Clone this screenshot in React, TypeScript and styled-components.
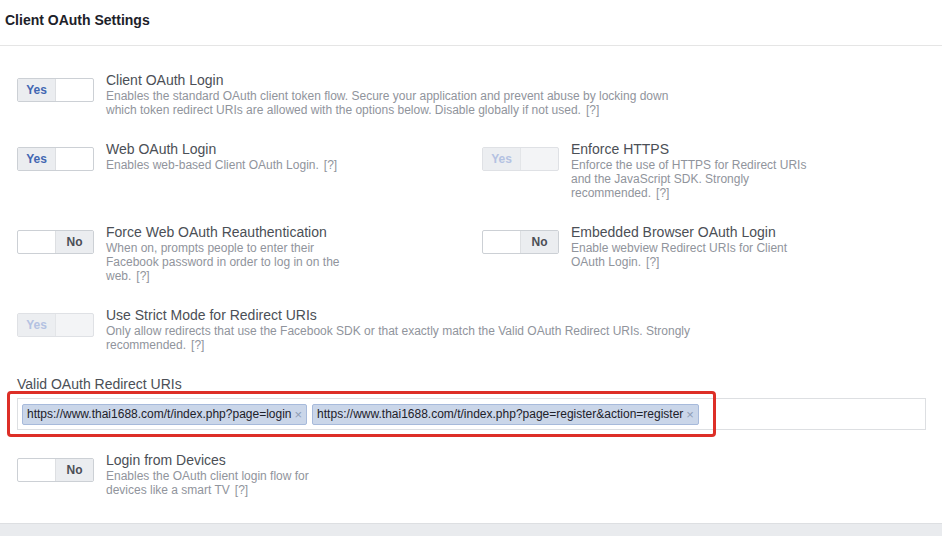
import React from 'react'
import styled, { createGlobalStyle } from 'styled-components'

const GlobalStyle = createGlobalStyle`
  html, body {
    margin: 0;
    padding: 0;
    background: #fff;
  }
  body {
    font-family: "Liberation Sans", Arial, sans-serif;
    color: #4b4f56;
  }
`

const Page = styled.div`
  width: 942px;
  min-height: 536px;
  display: flex;
  flex-direction: column;
  background: #fff;
`

const Header = styled.div`
  padding: 12px 0 16px 5px;
  border-bottom: 1px solid #e5e5e5;
  font-size: 14px;
  line-height: 17px;
  font-weight: bold;
  color: #1d2129;
`

const Body = styled.div`
  padding: 26px 16px 26px 17px;
  display: flex;
  flex-direction: column;
  flex: 1;
`

const Row = styled.div<{ $gap?: number }>`
  display: grid;
  grid-template-columns: 465px 1fr;
  margin-bottom: ${(p) => (p.$gap ?? 24)}px;
`

const SettingBox = styled.div<{ $span?: boolean }>`
  display: flex;
  align-items: flex-start;
  gap: 12px;
  grid-column: ${(p) => (p.$span ? '1 / -1' : 'auto')};
`

const Toggle = styled.div<{ $disabled?: boolean }>`
  flex: none;
  margin-top: 6px;
  width: 77px;
  height: 24px;
  box-sizing: border-box;
  display: flex;
  border: 1px solid ${(p) => (p.$disabled ? '#dfe1e5' : '#ccd0d5')};
  border-radius: 2px;
  background: ${(p) => (p.$disabled ? '#f3f4f6' : '#fff')};
  overflow: hidden;
`

const Half = styled.div<{ $active: boolean; $tone: 'yes' | 'no'; $disabled?: boolean; $first?: boolean }>`
  width: 50%;
  display: flex;
  align-items: center;
  justify-content: center;
  font-size: 12px;
  font-weight: bold;
  border-right: ${(p) => (p.$first ? `1px solid ${p.$disabled ? '#e3e5e8' : '#dddfe2'}` : 'none')};
  background: ${(p) => (p.$active ? (p.$disabled ? '#eceef1' : '#ebedf0') : 'transparent')};
  color: ${(p) =>
    p.$tone === 'yes' ? (p.$disabled ? '#b4c2e2' : '#4267b2') : '#4b4f56'};
`

const Info = styled.div`
  display: flex;
  flex-direction: column;
`

const Title = styled.div`
  font-size: 14px;
  line-height: 17px;
  color: #4b4f56;
`

const Desc = styled.div<{ $wide?: boolean }>`
  font-size: 12px;
  line-height: 14px;
  color: #90949c;
  max-width: ${(p) => (p.$wide ? '592px' : '242px')};
`

const Help = styled.span`
  margin-left: 5px;
  color: #90949c;
`

const FieldGroup = styled.div`
  display: flex;
  flex-direction: column;
  margin-bottom: 22px;
`

const FieldLabel = styled.div`
  font-size: 14px;
  line-height: 17px;
  color: #4b4f56;
  margin-bottom: 5px;
`

const InputWrap = styled.div`
  position: relative;
`

const TagInput = styled.div`
  height: 32px;
  box-sizing: border-box;
  border: 1px solid #dddfe2;
  display: flex;
  align-items: center;
  gap: 5px;
  padding: 0 4px;
  background: #fff;
`

const Tag = styled.div`
  height: 21px;
  box-sizing: border-box;
  display: flex;
  align-items: center;
  gap: 3px;
  padding: 0 4px 0 4px;
  background: #cad6e9;
  border: 1px solid #a7badb;
  border-radius: 2px;
  font-size: 12px;
  color: #1d2129;
  white-space: nowrap;
`

const TagClose = styled.span`
  color: #8e9db5;
  font-size: 13px;
  line-height: 1;
`

const Highlight = styled.div`
  position: absolute;
  left: -10px;
  top: -7px;
  width: 709px;
  height: 46px;
  box-sizing: border-box;
  border: 3px solid #dd2f27;
  border-radius: 4px;
  pointer-events: none;
`

const Footer = styled.div`
  height: 13px;
  background: #e9ebee;
  border-top: 1px solid #dddfe2;
`

type SettingProps = {
  title: string
  desc: string
  value: boolean
  disabled?: boolean
  wide?: boolean
  span?: boolean
  help?: boolean
}

const Setting: React.FC<SettingProps> = ({ title, desc, value, disabled, wide, span, help = true }) => (
  <SettingBox $span={span}>
    <Toggle $disabled={disabled}>
      <Half $first $active={value} $tone="yes" $disabled={disabled}>
        {value ? 'Yes' : ''}
      </Half>
      <Half $active={!value} $tone="no" $disabled={disabled}>
        {value ? '' : 'No'}
      </Half>
    </Toggle>
    <Info>
      <Title>{title}</Title>
      <Desc $wide={wide}>
        {desc}
        {help && <Help>[?]</Help>}
      </Desc>
    </Info>
  </SettingBox>
)

const uris = [
  'https://www.thai1688.com/t/index.php?page=login',
  'https://www.thai1688.com/t/index.php?page=register&action=register',
]

export default function App() {
  return (
    <Page>
      <GlobalStyle />
      <Header>Client OAuth Settings</Header>
      <Body>
        <Row>
          <Setting
            span
            wide
            value
            title="Client OAuth Login"
            desc="Enables the standard OAuth client token flow. Secure your application and prevent abuse by locking down which token redirect URIs are allowed with the options below. Disable globally if not used."
          />
        </Row>
        <Row>
          <Setting value title="Web OAuth Login" desc="Enables web-based Client OAuth Login." />
          <Setting
            value
            disabled
            title="Enforce HTTPS"
            desc="Enforce the use of HTTPS for Redirect URIs and the JavaScript SDK. Strongly recommended."
          />
        </Row>
        <Row>
          <Setting
            value={false}
            title="Force Web OAuth Reauthentication"
            desc="When on, prompts people to enter their Facebook password in order to log in on the web."
          />
          <Setting
            value={false}
            title="Embedded Browser OAuth Login"
            desc="Enable webview Redirect URIs for Client OAuth Login."
          />
        </Row>
        <Row>
          <Setting
            span
            wide
            value
            disabled
            title="Use Strict Mode for Redirect URIs"
            desc="Only allow redirects that use the Facebook SDK or that exactly match the Valid OAuth Redirect URIs. Strongly recommended."
          />
        </Row>
        <FieldGroup>
          <FieldLabel>Valid OAuth Redirect URIs</FieldLabel>
          <InputWrap>
            <TagInput>
              {uris.map((u) => (
                <Tag key={u}>
                  {u}
                  <TagClose>×</TagClose>
                </Tag>
              ))}
            </TagInput>
            <Highlight />
          </InputWrap>
        </FieldGroup>
        <Row $gap={0}>
          <Setting
            span
            value={false}
            title="Login from Devices"
            desc="Enables the OAuth client login flow for devices like a smart TV"
          />
        </Row>
      </Body>
      <Footer />
    </Page>
  )
}
